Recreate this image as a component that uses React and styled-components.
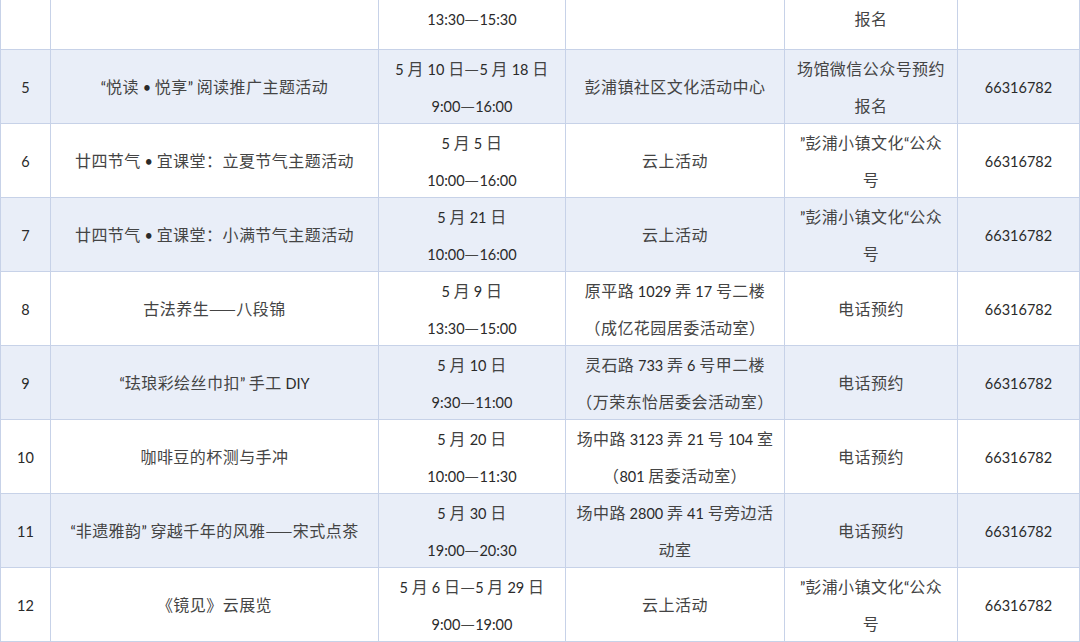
import React from "react";
import styled, { createGlobalStyle } from "styled-components";

const Global = createGlobalStyle`
  html, body { margin: 0; padding: 0; background: #ffffff; }
  body { overflow: hidden; }
`;

const Page = styled.div`
  width: 1080px;
  height: 642px;
  overflow: hidden;
  background: #ffffff;
`;

const Table = styled.table`
  border-collapse: collapse;
  table-layout: fixed;
  width: 1079px;
  margin-top: -1px;
  font-family: "Noto Sans CJK SC", "Noto Sans", sans-serif;
  font-size: 16px;
  color: #444444;
`;

const Row = styled.tr`
  background: ${(p) => (p.$alt ? "#e9eef8" : "#ffffff")};
  height: ${(p) => (p.$partial ? "50px" : "74px")};
`;

const Cell = styled.td`
  border: 1px solid #c7d2e8;
  padding: 0;
  text-align: center;
  vertical-align: ${(p) => (p.$top ? "top" : "middle")};
`;

const Line = styled.div`
  line-height: 36.5px;
  height: 36.5px;
  white-space: nowrap;
`;

const Cjk = styled.span`
  letter-spacing: 0.45px;
`;

const Latin = styled.span`
  font-family: "Lato", "Open Sans", sans-serif;
  font-size: 14.5px;
  color: #2a2a2a;
`;

const widths = [50, 328, 187, 219, 173, 122];

const LATIN = /([\u0000-\u2013\u2015-\u2FFF]+)/;

function Text({ children }) {
  const parts = String(children).split(LATIN).filter(Boolean);
  return parts.map((p, i) =>
    /^[\u0000-\u2013\u2015-\u2FFF]/.test(p) ? <Latin key={i}>{p}</Latin> : <Cjk key={i}>{p}</Cjk>
  );
}

function Content({ value }) {
  const lines = Array.isArray(value) ? value : [value];
  return lines.map((l, i) => (
    <Line key={i}>
      <Text>{l}</Text>
    </Line>
  ));
}

const wechat = ["”彭浦小镇文化“公众", "号"];
const phone = "66316782";

const rows = [
  ["5", "“悦读 • 悦享” 阅读推广主题活动", ["5 月 10 日—5 月 18 日", "9:00—16:00"], "彭浦镇社区文化活动中心", ["场馆微信公众号预约", "报名"], phone],
  ["6", "廿四节气 • 宜课堂：立夏节气主题活动", ["5 月 5 日", "10:00—16:00"], "云上活动", wechat, phone],
  ["7", "廿四节气 • 宜课堂：小满节气主题活动", ["5 月 21 日", "10:00—16:00"], "云上活动", wechat, phone],
  ["8", "古法养生——八段锦", ["5 月 9 日", "13:30—15:00"], ["原平路 1029 弄 17 号二楼", "（成亿花园居委活动室）"], "电话预约", phone],
  ["9", "“珐琅彩绘丝巾扣” 手工 DIY", ["5 月 10 日", "9:30—11:00"], ["灵石路 733 弄 6 号甲二楼", "（万荣东怡居委会活动室）"], "电话预约", phone],
  ["10", "咖啡豆的杯测与手冲", ["5 月 20 日", "10:00—11:30"], ["场中路 3123 弄 21 号 104 室", "（801 居委活动室）"], "电话预约", phone],
  ["11", "“非遗雅韵” 穿越千年的风雅——宋式点茶", ["5 月 30 日", "19:00—20:30"], ["场中路 2800 弄 41 号旁边活", "动室"], "电话预约", phone],
  ["12", "《镜见》云展览", ["5 月 6 日—5 月 29 日", "9:00—19:00"], "云上活动", wechat, phone],
];

const partial = ["", "", "13:30—15:30", "", "报名", ""];

export default function App() {
  return (
    <Page>
      <Global />
      <Table>
        <colgroup>
          {widths.map((w, i) => (
            <col key={i} style={{ width: w }} />
          ))}
        </colgroup>
        <tbody>
          <Row $partial>
            {partial.map((v, i) => (
              <Cell key={i} $top>
                {v ? <Content value={v} /> : null}
              </Cell>
            ))}
          </Row>
          {rows.map((r, ri) => (
            <Row key={ri} $alt={ri % 2 === 0}>
              {r.map((v, i) => (
                <Cell key={i}>
                  <Content value={v} />
                </Cell>
              ))}
            </Row>
          ))}
        </tbody>
      </Table>
    </Page>
  );
}
